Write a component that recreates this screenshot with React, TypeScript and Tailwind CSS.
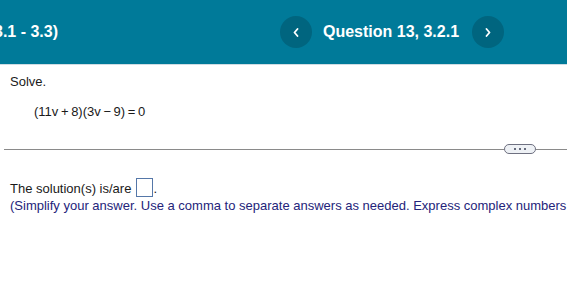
import React from "react";

const font = { fontFamily: '"Liberation Sans", Arial, sans-serif' };

function Chevron({ dir }: { dir: "left" | "right" }) {
  return (
    <svg width="6" height="9" viewBox="0 0 6 9" fill="none">
      {dir === "left" ? (
        <polyline points="4.5,1 1.5,4.5 4.5,8" stroke="white" strokeWidth="1.8" strokeLinecap="round" strokeLinejoin="round" />
      ) : (
        <polyline points="1.5,1 4.5,4.5 1.5,8" stroke="white" strokeWidth="1.8" strokeLinecap="round" strokeLinejoin="round" />
      )}
    </svg>
  );
}

export default function App() {
  return (
    <div className="w-[567px] h-[296px] bg-white overflow-hidden" style={font}>
      <div className="h-[64px] bg-[#007a99] flex items-center border-b border-[#cfdce3] box-content">
        <div className="w-[280px] shrink-0 overflow-hidden">
          <span className="block -ml-[6px] text-white font-bold text-[16px] leading-[20px] whitespace-nowrap">3.1 - 3.3)</span>
        </div>
        <div className="flex items-center">
          <div className="w-[32px] h-[32px] rounded-full bg-[#00657f] flex items-center justify-center">
            <Chevron dir="left" />
          </div>
          <span className="ml-[11px] mr-[13px] text-white font-bold text-[16px] leading-[20px] whitespace-nowrap">Question 13, 3.2.1</span>
          <div className="w-[32px] h-[32px] rounded-full bg-[#00657f] flex items-center justify-center">
            <Chevron dir="right" />
          </div>
        </div>
      </div>

      <div className="pt-[9px] text-[13px] leading-[16px] text-[#1a1a1a]">
        <div className="pl-[10px]">Solve.</div>
        <div className="pl-[34px] mt-[14px] whitespace-nowrap">
          (11v{"\u2009"}+{"\u2009"}8)(3v{"\u2009"}−{"\u2009"}9){"\u2009"}={"\u2009"}0
        </div>

        <div className="mt-[24px] flex items-center pl-[4px] h-[10px]">
          <div className="flex-1 h-px bg-[#8a8a8a]" />
          <div className="w-[32px] h-[10px] rounded-full border border-[#6e7080] bg-[#eef1f5] flex items-center justify-center gap-[3px]">
            <span className="w-[2px] h-[2px] bg-[#3a3f55] rounded-full" />
            <span className="w-[2px] h-[2px] bg-[#3a3f55] rounded-full" />
            <span className="w-[2px] h-[2px] bg-[#3a3f55] rounded-full" />
          </div>
          <div className="w-[31px] h-px bg-[#8a8a8a]" />
        </div>

        <div className="mt-[27px] pl-[10px] flex items-start">
          <span className="whitespace-nowrap">The solution(s) is/are</span>
          <span className="ml-[5px] -mt-[3px] w-[17px] h-[19px] border border-[#5577a8] bg-white" />
          <span>.</span>
        </div>
        <div className="pl-[10px] mt-px whitespace-nowrap text-[#24247a]">
          (Simplify your answer. Use a comma to separate answers as needed. Express complex numbers in terms of i.)
        </div>
      </div>
    </div>
  );
}
